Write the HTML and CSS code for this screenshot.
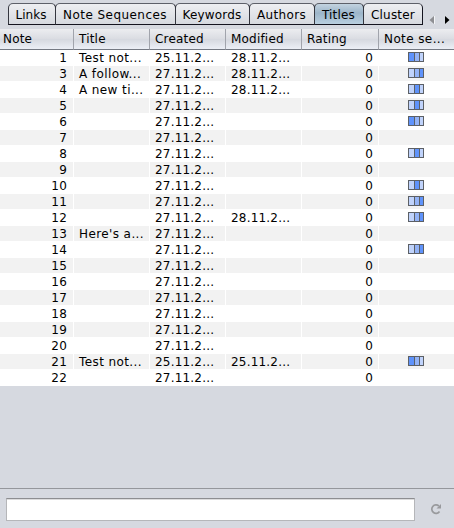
FILE: index.html
```html
<!DOCTYPE html>
<html lang="en">
<head>
<meta charset="utf-8">
<title>Titles</title>
<link rel="stylesheet" href="styles.css">
</head>
<body>
<nav class="tabs">
  <span class="tab links">Links</span><span class="tab sequences">Note Sequences</span><span class="tab keywords">Keywords</span><span class="tab authors">Authors</span><span class="tab titles active">Titles</span><span class="tab cluster">Cluster</span>
  <svg class="arrows" width="24" height="12" viewBox="0 0 24 12"><path d="M5 2v8L0.500 6z" fill="#8e8f93"/><path d="M5.500 2v8" stroke="#f4f5f7"/><path d="M16 2v8l4.500-4z" fill="#000"/></svg>
</nav>
<table class="notes">
  <colgroup><col class="c-note"><col class="c-text"><col class="c-text"><col class="c-text"><col class="c-rating"><col class="c-seq"></colgroup>
  <thead><tr><th>Note</th><th>Title</th><th>Created</th><th>Modified</th><th>Rating</th><th class="wide">Note se...</th></tr></thead>
  <tbody id="rows"></tbody>
</table>
<div class="empty"></div>
<footer class="filter">
  <input class="field" type="text" aria-label="Filter">
  <svg class="refresh" width="12" height="12" viewBox="0 0 12 12"><path d="M9.500 8.500A4.200 4.200 0 1 1 8.800 3" fill="none" stroke="#999a9d" stroke-width="1.700"/><path d="M11 1v4.500H6.500z" fill="#999a9d"/></svg>
</footer>
<script src="rows.js"></script>
</body>
</html>
```
FILE: styles.css
```css
* { box-sizing: border-box; }
body {
  margin: 0;
  width: 454px;
  height: 528px;
  overflow: hidden;
  display: flex;
  flex-direction: column;
  background: #d6d9e0;
  color: #000;
  font: 12px/14px "DejaVu Sans", sans-serif;
  letter-spacing: 0.2px;
}
.tabs {
  display: flex;
  height: 29px;
  padding: 3px 0 0 8px;
  flex: none;
}
.tab {
  height: 22px;
  border: 1px solid #14141f;
  border-top-color: #5d6069;
  border-left-color: #34363f;
  border-radius: 5px 5px 0 0;
  background: linear-gradient(#eeeff2, #d6d9df);
  text-align: center;
  line-height: 22px;
  white-space: nowrap;
}
.tab + .tab { margin-left: -1px; }
.links { width: 48px; padding-right: 2px; letter-spacing: 0; }
.sequences { width: 121px; padding-right: 1px; letter-spacing: 0.45px; }
.keywords { width: 75px; padding-right: 1px; }
.authors { width: 66px; padding-right: 1px; letter-spacing: 0.35px; }
.titles { width: 50px; padding-right: 1px; }
.cluster { width: 60px; }
.active { background: linear-gradient(#c3d3e0, #9cb5c9 45%, #b9cfdf); }
.arrows { margin: 11px 0 0 6px; }
.notes {
  width: 454px;
  flex: none;
  table-layout: fixed;
  border-collapse: separate;
  border-spacing: 0;
}
.c-note { width: 74px; }
.c-text { width: 76px; }
.c-rating { width: 77px; }
.c-seq { width: 75px; }
th {
  height: 21px;
  padding: 1px 0 0 5px;
  text-align: left;
  font-weight: normal;
  white-space: nowrap;
  line-height: 19px;
  border-right: 1px solid #a1a4ac;
  border-bottom: 1px solid #747983;
  background: linear-gradient(#ecedf0, #dadce2 50%, #d5d8df 51%, #eceff6);
}
th:first-child { padding-left: 3px; }
th:last-child { border-right: 0; }
.wide { letter-spacing: 0.4px; }
td {
  height: 16px;
  padding: 1px 0 0 5px;
  white-space: nowrap;
  border-right: 1px solid #fff;
  border-bottom: 1px solid #fff;
  background: #fff;
}
tr:nth-child(even) td { background: #f2f2f2; }
.title { letter-spacing: 0.4px; }
.number { text-align: right; padding-right: 6px; }
.rating { text-align: right; padding-right: 5px; }
.seq { padding: 0; border-right: 0; vertical-align: top; }
.boxes {
  display: flex;
  gap: 1px;
  width: 16px;
  height: 10px;
  margin: 2px 0 0 29px;
  padding: 1px;
  background: #5c6066;
}
.boxes i { flex: 0 0 5px; }
.boxes i:nth-child(2) { flex-basis: 4px; }
.boxes i:nth-child(3) { flex-basis: 3px; }
.boxes .low { background: #c0d3fb; }
.boxes .mid { background: #93b3f7; }
.boxes .high { background: #5f93fb; }
.empty { flex: 1; }
.filter {
  display: flex;
  flex: none;
  height: 40px;
  padding: 9px 0 0 6px;
  border-top: 1px solid #95979c;
}
.field {
  width: 409px;
  height: 23px;
  margin: 0;
  padding: 0 4px;
  outline: 0;
  border: 1px solid #b5b6b9;
  border-top-color: #8d8e91;
  border-radius: 0;
  background: #fff;
  box-shadow: inset 0 1px #dcdcdd;
}
.refresh { margin: 5px 0 0 15px; }
```
FILE: rows.js
```js
const LEVELS = { l: "low", m: "mid", h: "high" };
const NOTES = [
  [1, "Test not...", "25.11.2...", "28.11.2...", "hml"],
  [3, "A follow...", "27.11.2...", "28.11.2...", "lmh"],
  [4, "A new ti...", "27.11.2...", "28.11.2...", "lhl"],
  [5, "", "27.11.2...", "", "lhl"],
  [6, "", "27.11.2...", "", "hml"],
  [7, "", "27.11.2...", "", ""],
  [8, "", "27.11.2...", "", "lhl"],
  [9, "", "27.11.2...", "", ""],
  [10, "", "27.11.2...", "", "lhl"],
  [11, "", "27.11.2...", "", "lmh"],
  [12, "", "27.11.2...", "28.11.2...", "lmh"],
  [13, "Here's a...", "27.11.2...", "", ""],
  [14, "", "27.11.2...", "", "lmh"],
  [15, "", "27.11.2...", "", ""],
  [16, "", "27.11.2...", "", ""],
  [17, "", "27.11.2...", "", ""],
  [18, "", "27.11.2...", "", ""],
  [19, "", "27.11.2...", "", ""],
  [20, "", "27.11.2...", "", ""],
  [21, "Test not...", "25.11.2...", "25.11.2...", "hml"],
  [22, "", "27.11.2...", "", ""]
];
document.getElementById("rows").innerHTML = NOTES.map(([id, title, created, modified, seq]) => {
  const boxes = seq ? `<div class="boxes">${[...seq].map(c => `<i class="${LEVELS[c]}"></i>`).join("")}</div>` : "";
  return `<tr><td class="number">${id}</td><td class="title">${title}</td><td>${created}</td><td>${modified}</td><td class="rating">0</td><td class="seq">${boxes}</td></tr>`;
}).join("");
```
